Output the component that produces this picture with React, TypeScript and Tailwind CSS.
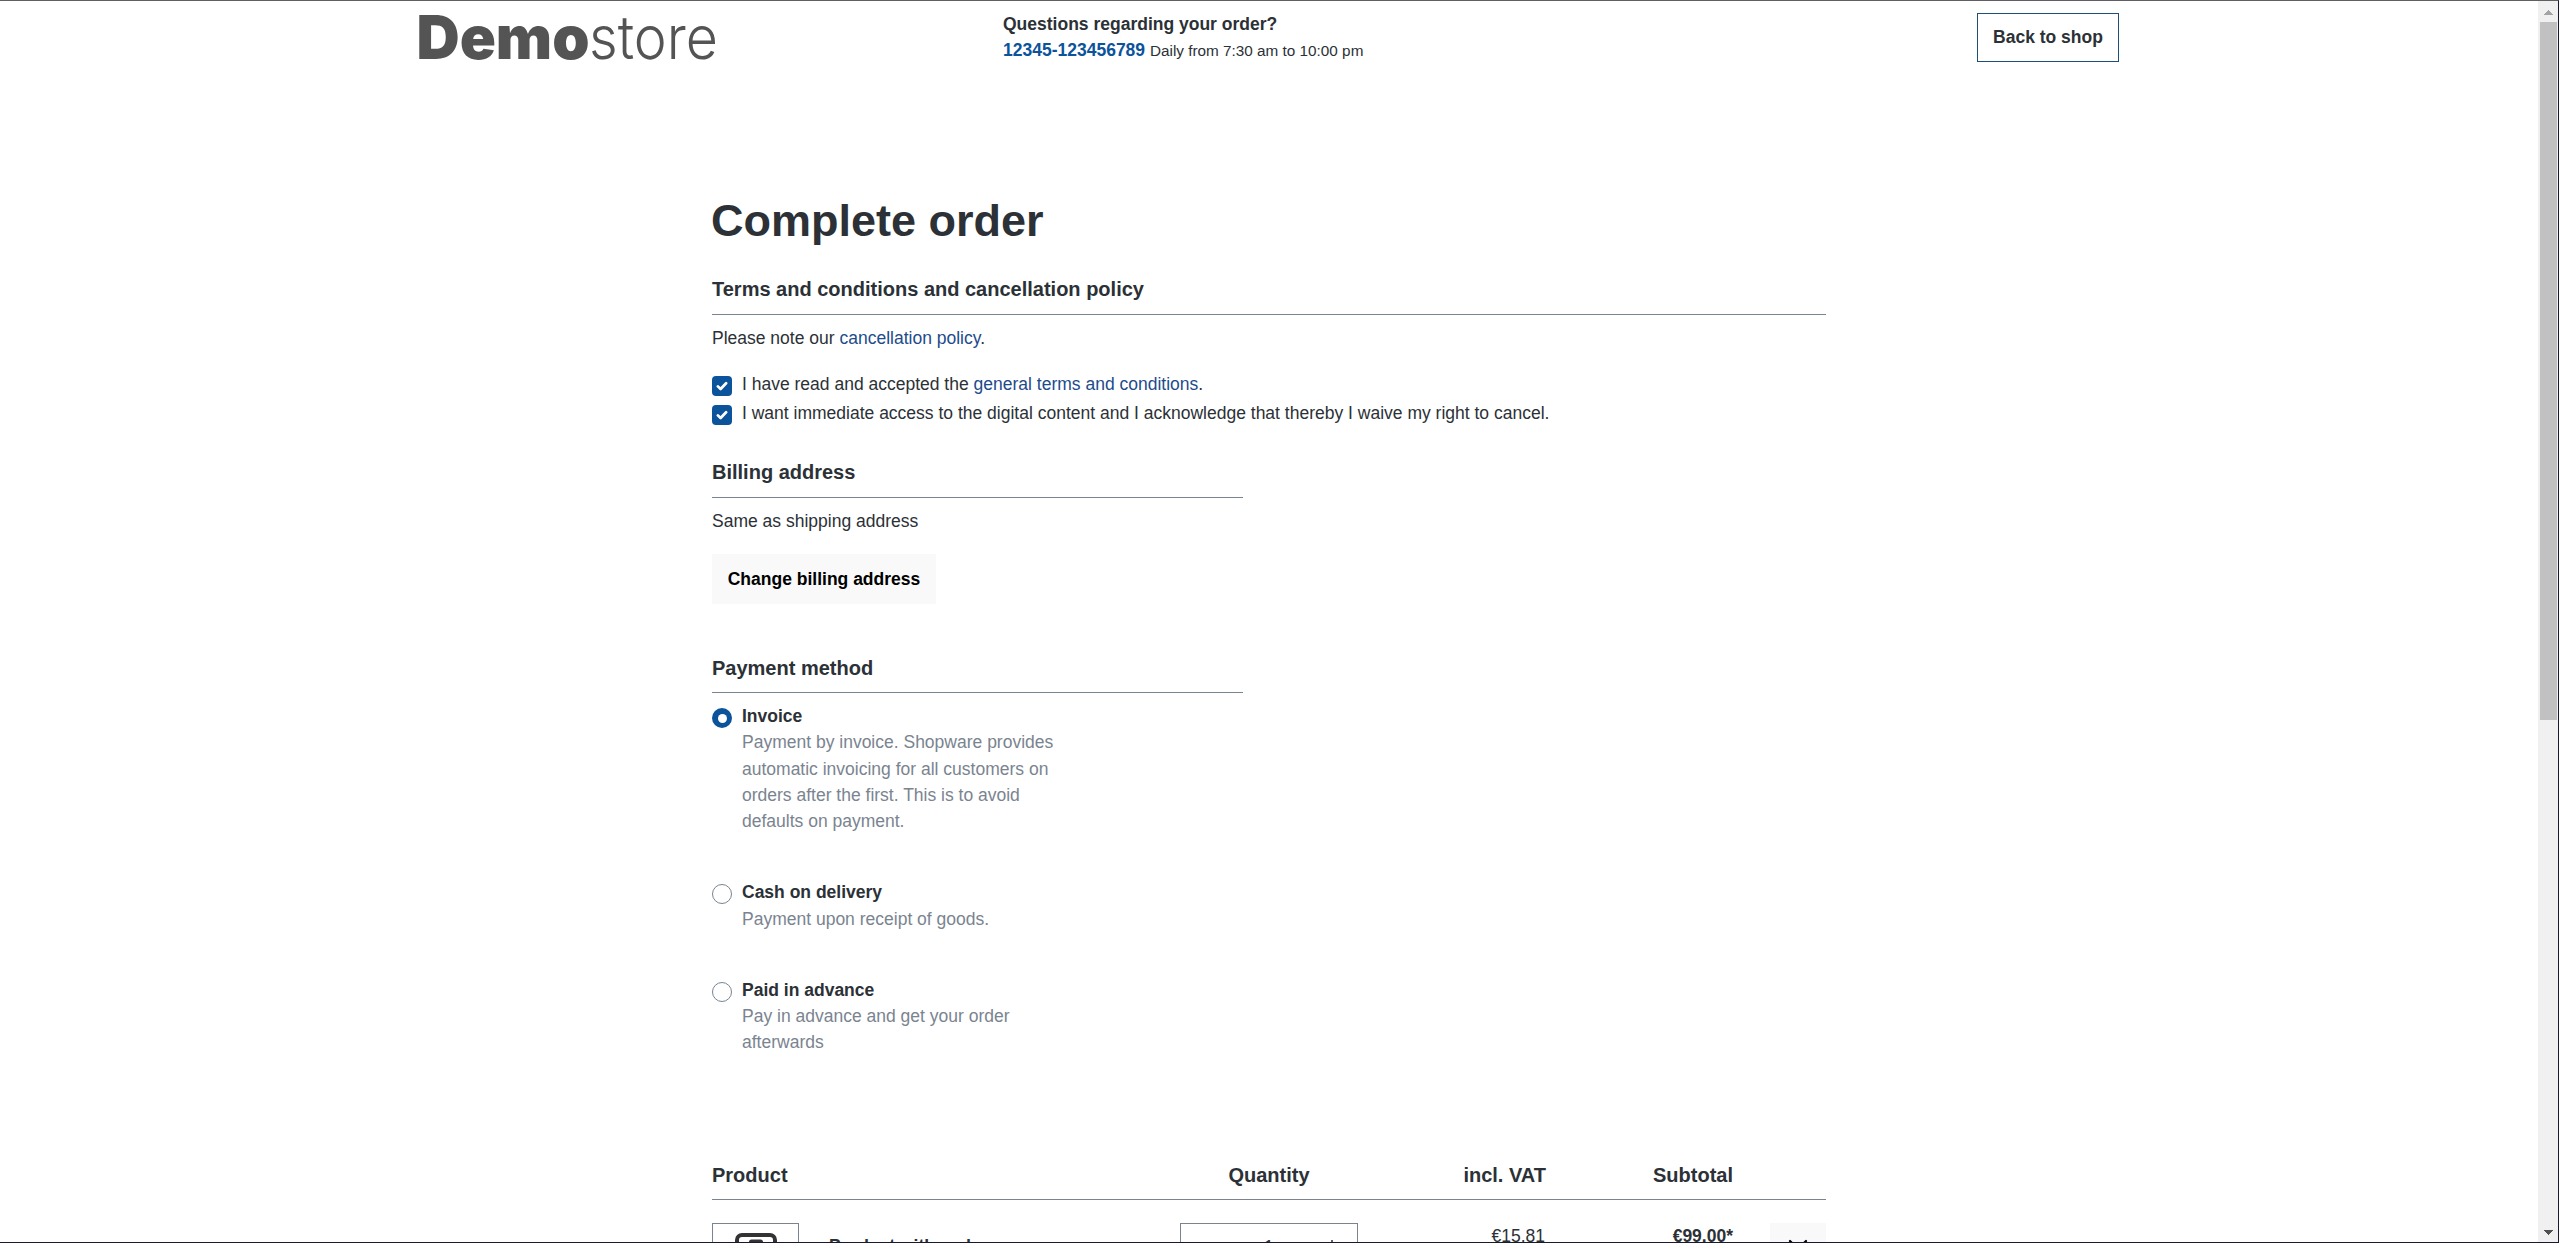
import React from "react";

function SectionTitle({ children, className = "" }: { children: React.ReactNode; className?: string }) {
  return (
    <h2 className={`border-b border-[#798490] text-[20px] leading-[30px] font-bold ${className}`}>{children}</h2>
  );
}

function Checkbox() {
  return (
    <span className="mt-[5px] flex size-5 shrink-0 items-center justify-center rounded-[4px] bg-[#0b539b]">
      <svg viewBox="0 0 12 10" className="h-[10px] w-3" fill="none" stroke="#fff" strokeWidth="2.7" strokeLinecap="round" strokeLinejoin="round">
        <path d="M1.9 5.4 4.6 8 10.1 2.2" />
      </svg>
    </span>
  );
}

function Terms({ children }: { children: React.ReactNode }) {
  return (
    <div className="flex gap-[10px]">
      <Checkbox />
      <span>{children}</span>
    </div>
  );
}

function Payment({ title, lines, checked }: { title: string; lines: string[]; checked?: boolean }) {
  return (
    <div className="flex gap-[10px]">
      {checked ? (
        <span className="mt-[5px] flex size-5 shrink-0 items-center justify-center rounded-full bg-[#0b539b]">
          <span className="size-[9px] rounded-full bg-white" />
        </span>
      ) : (
        <span className="mt-[5px] size-5 shrink-0 rounded-full border border-[#798490]" />
      )}
      <div className="leading-[26.25px]">
        <div className="font-bold">{title}</div>
        <div className="text-[#7a8490]">
          {lines.map((line) => (
            <div key={line}>{line}</div>
          ))}
        </div>
      </div>
    </div>
  );
}

function Scrollbar() {
  return (
    <div className="flex w-5 flex-col items-center bg-[#f0f0f0]">
      <svg viewBox="0 0 9 5" className="mt-[9px] h-[5px] w-[9px]" shapeRendering="crispEdges">
        <path d="M4.5 0 9 5H0z" fill="#a3a3a3" />
      </svg>
      <div className="mt-[7px] h-[698px] w-[17px] bg-[#c1c1c1]" />
      <svg viewBox="0 0 9 5" className="mt-auto mb-[7px] h-[5px] w-[9px]" shapeRendering="crispEdges">
        <path d="M0 0H9L4.5 5z" fill="#505050" />
      </svg>
    </div>
  );
}

export default function App() {
  return (
    <div className="flex h-[1243px] w-[2559px] overflow-hidden border-t border-r border-b border-t-[#605e62] border-r-[#1a1a2e] border-b-[#1a1a2e] bg-white font-['Liberation_Sans',Arial,sans-serif] text-[17.5px] leading-[26px] text-[#2b3136]">
      <div className="min-w-0 flex-1">
        <header className="mx-auto flex h-[190px] w-[1700px] items-start">
          <svg className="h-[76px] w-[300px] overflow-visible" viewBox="0 0 300 76" fill="#545454">
            <text x="-2.5" y="58" fontFamily="Inter" fontWeight="900" fontSize="60.5" textLength="173" lengthAdjust="spacingAndGlyphs">Demo</text>
            <text x="170" y="58" fontFamily="Inter" fontWeight="300" fontSize="60.5" textLength="129" lengthAdjust="spacingAndGlyphs">store</text>
          </svg>
          <div className="mt-[10px] ml-[284px]">
            <div className="font-bold">Questions regarding your order?</div>
            <div>
              <span className="font-bold text-[#0b539b]">12345-123456789</span>{" "}
              <span className="text-[15.3px]">Daily from 7:30 am to 10:00 pm</span>
            </div>
          </div>
          <div className="mt-3 ml-auto flex h-[49px] w-[142px] items-start justify-center border border-[#1b4f7c] pt-[10px] font-bold">
            Back to shop
          </div>
        </header>

        <main className="ml-[712px] w-[1114px]">
          <h1 className="ml-[-1px] pt-0.5 text-[45px] leading-[56px] font-bold">Complete order</h1>

          <SectionTitle className="mt-[25px] h-[41px]">Terms and conditions and cancellation policy</SectionTitle>
          <p className="mt-[10px]">
            Please note our <a className="text-[#1d4b8b]">cancellation policy</a>.
          </p>
          <div className="mt-5 flex flex-col gap-[3px]">
            <Terms>
              I have read and accepted the <a className="text-[#1d4b8b]">general terms and conditions</a>.
            </Terms>
            <Terms>
              I want immediate access to the digital content and I acknowledge that thereby I waive my right to cancel.
            </Terms>
          </div>

          <div className="w-[531px]">
            <SectionTitle className="mt-[31px] h-[41px]">Billing address</SectionTitle>
            <p className="mt-[10px]">Same as shipping address</p>
            <button className="mt-5 flex h-[50px] w-[224px] items-start justify-center bg-[#f9f9f9] pt-3 font-bold text-black">
              Change billing address
            </button>

            <SectionTitle className="mt-[49px] h-[40px]">Payment method</SectionTitle>
            <div className="mt-[10px] flex h-[353px] flex-col gap-[45px]">
              <Payment
                checked
                title="Invoice"
                lines={[
                  "Payment by invoice. Shopware provides",
                  "automatic invoicing for all customers on",
                  "orders after the first. This is to avoid",
                  "defaults on payment.",
                ]}
              />
              <Payment title="Cash on delivery" lines={["Payment upon receipt of goods."]} />
              <Payment title="Paid in advance" lines={["Pay in advance and get your order", "afterwards"]} />
            </div>
          </div>

          <div className="mt-[104px] flex h-[40px] border-b border-[#798490] text-[20px] leading-[30px] font-bold">
            <div className="w-[468px]">Product</div>
            <div className="w-[178px] text-center">Quantity</div>
            <div className="w-[188px] text-right">incl. VAT</div>
            <div className="w-[187px] text-right">Subtotal</div>
          </div>
          <div className="mt-[23px] flex items-start">
            <div className="flex h-[87px] w-[87px] justify-center border border-[#798490] pt-[9px]">
              <svg viewBox="0 0 42 60" className="h-[60px] w-[42px]" fill="none" stroke="#333">
                <rect x="2" y="2" width="38" height="56" rx="5" strokeWidth="4" />
                <path d="M15 11V9Q15 7.500 16.500 7.500H25.500Q27 7.500 27 9V11z" fill="#333" strokeWidth="2" />
              </svg>
            </div>
            <div className="mt-[10px] w-[352px] pl-[30px] font-bold">Product with code</div>
            <div className="ml-[29px] flex h-[50px] w-[178px] items-start border border-[#798490] pt-[10px]">
              <span className="ml-[83px] w-[61px]">1</span>
              <svg viewBox="0 0 14 14" className="mt-1.5 size-[14px]" stroke="#2b3136" strokeWidth="1.500">
                <path d="M7 0V14M0 7H14" />
              </svg>
            </div>
            <div className="w-[187px] text-right">€15.81</div>
            <div className="w-[188px] text-right font-bold">€99.00*</div>
            <div className="ml-auto flex h-[50px] w-14 justify-center bg-[#f9f9f9] pt-[16px]">
              <svg viewBox="0 0 20 20" className="size-5" stroke="#000" strokeWidth="2.200" strokeLinecap="round">
                <path d="M2 2 18 18M18 2 2 18" />
              </svg>
            </div>
          </div>
        </main>
      </div>
      <Scrollbar />
    </div>
  );
}
